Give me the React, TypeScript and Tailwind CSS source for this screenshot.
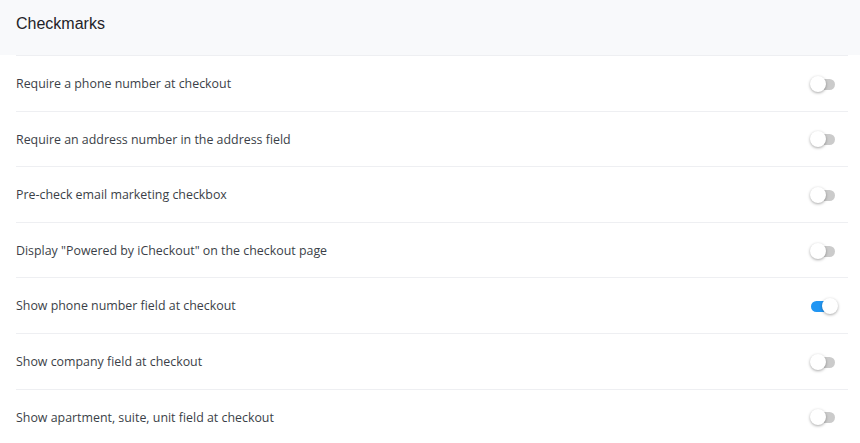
const rows = [
  { label: "Require a phone number at checkout", on: false },
  { label: "Require an address number in the address field", on: false },
  { label: "Pre-check email marketing checkbox", on: false },
  { label: 'Display "Powered by iCheckout" on the checkout page', on: false },
  { label: "Show phone number field at checkout", on: true },
  { label: "Show company field at checkout", on: false },
  { label: "Show apartment, suite, unit field at checkout", on: false },
];

function Toggle({ on }: { on: boolean }) {
  return (
    <div className="relative w-[24px] h-[11px] mr-[13px] mt-[2px]">
      <div
        className={`absolute inset-0 rounded-full ${on ? "bg-[#2196f3]" : "bg-[#cbcbcb]"}`}
      />
      <div
        className={`absolute top-[-3px] w-[16px] h-[16px] rounded-full bg-white shadow-[0_1px_3px_rgba(0,0,0,0.35)] ${
          on ? "left-[11px]" : "left-[-1px]"
        }`}
      />
    </div>
  );
}

export default function App() {
  return (
    <div
      className="w-[860px] h-[443px] bg-white overflow-hidden"
      style={{ fontFamily: '"Open Sans", "Noto Sans", sans-serif' }}
    >
      <div className="h-[55px] bg-[#f8f9fb] px-4 pt-[15px]">
        <h2
          className="text-[16px] leading-[18px] text-[#1f2328]"
          style={{ fontFamily: '"Liberation Sans", Arial, sans-serif' }}
        >
          Checkmarks
        </h2>
      </div>
      <div className="ml-4 mr-3">
        {rows.map((r) => (
          <div
            key={r.label}
            className="h-[55.6px] border-t border-[#eeeff2] flex items-center justify-between"
          >
            <span className="text-[12.4px] text-[#3b3f48] mt-[2px]">{r.label}</span>
            <Toggle on={r.on} />
          </div>
        ))}
      </div>
    </div>
  );
}
